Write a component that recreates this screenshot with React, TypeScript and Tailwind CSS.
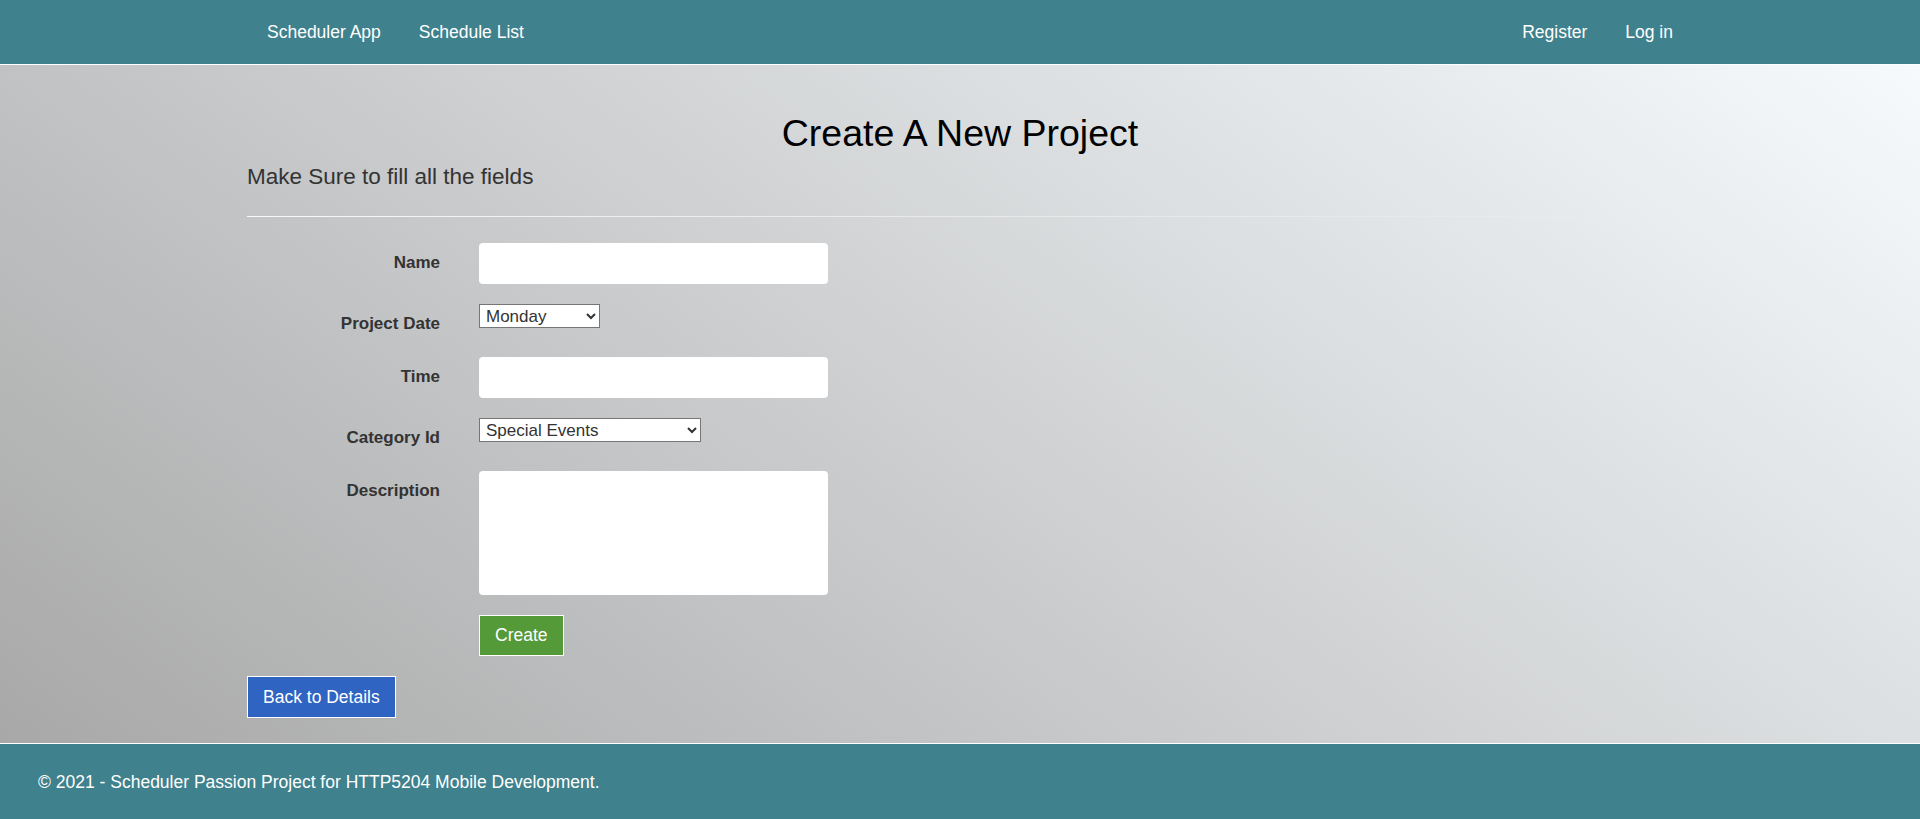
import React from "react";

export default function App() {
  return (
    <div className="min-h-screen flex flex-col font-['Liberation_Sans',Arial,sans-serif]">
      <header className="h-[65px] bg-[#3f818d] border-b border-white">
        <div className="w-[1426px] mx-auto h-full flex items-center justify-between text-white text-[17.5px]">
          <nav className="flex gap-[38px] pl-[20px]">
            <a href="#">Scheduler App</a>
            <a href="#">Schedule List</a>
          </nav>
          <nav className="flex gap-[38px]">
            <a href="#">Register</a>
            <a href="#">Log in</a>
          </nav>
        </div>
      </header>

      <main className="flex-1 bg-[linear-gradient(37deg,#a8a8a8,#f6fafd)]">
        <div className="w-[1426px] mx-auto pb-[25px]">
          <h1 className="pt-[48px] text-[37.5px] leading-[40px] text-center text-black">
            Create A New Project
          </h1>
          <h2 className="mt-[12px] text-[22.5px] leading-[24px] text-[#333]">
            Make Sure to fill all the fields
          </h2>
          <div className="mt-[27px] h-px bg-linear-to-r from-white/90 to-transparent" />

          <form className="mt-[26px] grid grid-cols-[193px_349px] gap-x-[39px] gap-y-[20px]">
            <label className="pt-[7px] leading-[26px] text-right font-bold text-[17px] text-[#333]">Name</label>
            <input className="h-[41px] w-full bg-white rounded-[4px] px-3 text-[17px] text-[#333] outline-none" />

            <label className="pt-[7px] leading-[26px] text-right font-bold text-[17px] text-[#333]">Project Date</label>
            <div>
              <select className="h-[24px] w-[121px] bg-white border border-[#767676] text-[17px] text-[#333] pl-[2px]" defaultValue="Monday">
                <option>Monday</option>
                <option>Tuesday</option>
                <option>Wednesday</option>
                <option>Thursday</option>
                <option>Friday</option>
                <option>Saturday</option>
                <option>Sunday</option>
              </select>
            </div>

            <label className="pt-[7px] leading-[26px] text-right font-bold text-[17px] text-[#333]">Time</label>
            <input className="h-[41px] w-full bg-white rounded-[4px] px-3 text-[17px] text-[#333] outline-none" />

            <label className="pt-[7px] leading-[26px] text-right font-bold text-[17px] text-[#333]">Category Id</label>
            <div>
              <select className="h-[24px] w-[222px] bg-white border border-[#767676] text-[17px] text-[#333] pl-[2px]" defaultValue="Special Events">
                <option>Special Events</option>
                <option>Work</option>
                <option>School</option>
              </select>
            </div>

            <label className="pt-[7px] leading-[26px] text-right font-bold text-[17px] text-[#333]">Description</label>
            <textarea className="h-[124px] w-full bg-white rounded-[4px] px-3 py-2 text-[17px] text-[#333] outline-none resize-none" />

            <div />
            <div>
              <button type="button" className="h-[41px] px-[15px] border border-white bg-[#559a39] text-white text-[17.5px] leading-[25px]">
                Create
              </button>
            </div>
          </form>

          <div className="mt-[20px]">
            <a href="#" className="inline-block h-[42px] px-[15px] border border-white bg-[#2f64c2] text-white text-[17.5px] leading-[40px]">
              Back to Details
            </a>
          </div>
        </div>
      </main>

      <footer className="h-[77px] bg-[#3f818d] border-t border-white flex items-center pl-[38px] text-white text-[17.5px]">
        <p>© 2021 - Scheduler Passion Project for HTTP5204 Mobile Development.</p>
      </footer>
    </div>
  );
}
